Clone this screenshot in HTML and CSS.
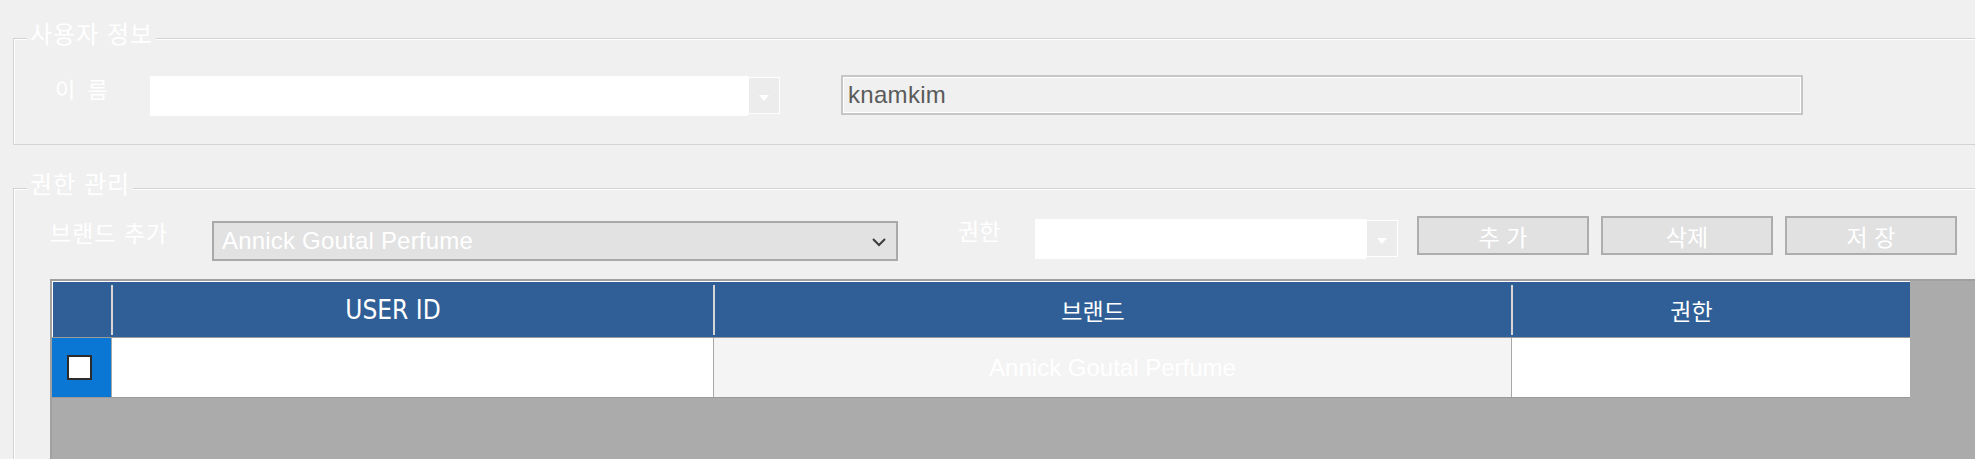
FILE: index.html
```html
<!DOCTYPE html>
<html lang="ko">
<head>
<meta charset="utf-8">
<title>사용자 권한 관리</title>
<link rel="stylesheet" href="styles.css">
</head>
<body>
<div class="page">
  <section class="group group-user">
    <div class="group-title">사용자 정보</div>
    <div class="user-row">
      <span class="lbl lbl-name">이&nbsp;&nbsp;름</span>
      <div class="combo combo-name">
        <div class="combo-field"></div>
        <div class="combo-btn"><span class="tri"></span></div>
      </div>
      <div class="textbox">knamkim</div>
    </div>
  </section>

  <section class="group group-auth">
    <div class="group-title">권한 관리</div>
    <div class="toolbar">
      <span class="lbl lbl-brand">브랜드 추가</span>
      <div class="select-brand">
        <span class="select-text">Annick Goutal Perfume</span>
        <svg class="chev" width="14" height="9" viewBox="0 0 14 9"><path d="M1 1 L7 7 L13 1" fill="none" stroke="#3c3c3c" stroke-width="2"/></svg>
      </div>
      <span class="lbl lbl-auth">권한</span>
      <div class="combo combo-auth">
        <div class="combo-field"></div>
        <div class="combo-btn"><span class="tri"></span></div>
      </div>
      <div class="btns">
        <div class="btn">추 가</div>
        <div class="btn">삭제</div>
        <div class="btn">저 장</div>
      </div>
    </div>

    <div class="grid">
      <div class="grid-head">
        <div class="hcell c-rh"></div>
        <div class="hcell c-user"><span class="htext latin">USER ID</span></div>
        <div class="hcell c-brand"><span class="htext">브랜드</span></div>
        <div class="hcell c-auth"><span class="htext">권한</span></div>
      </div>
      <div class="grid-row">
        <div class="cell c-rh rowhead"><span class="check"></span></div>
        <div class="cell c-user"></div>
        <div class="cell c-brand brand-cell">Annick Goutal Perfume</div>
        <div class="cell c-auth"></div>
      </div>
    </div>
  </section>
</div>
</body>
</html>
```

FILE: styles.css
```css
html, body {
  margin: 0;
  padding: 0;
  overflow: hidden;
}
body {
  background: #f0f0f0;
  width: 1975px;
  height: 459px;
  font-family: "Noto Sans CJK KR", "Liberation Sans", sans-serif;
  color: #ffffff;
}
.page {
  display: flex;
  flex-direction: column;
  padding-top: 38px;
  height: 421px;
  overflow: hidden;
}
.group {
  position: relative;
  margin-left: 13px;
  width: 2000px;
  border: 1px solid #d3d3d3;
  box-shadow: inset 1px 1px 0 #ffffff;
  flex-shrink: 0;
}
.group-title {
  position: absolute;
  left: 13px;
  top: -20px;
  padding: 0 3px;
  background: #f0f0f0;
  font-size: 24px;
  line-height: 28px;
  color: #ffffff;
  letter-spacing: 1px;
}
.group-user {
  padding: 37px 0 28px 41px;
}
.user-row {
  display: flex;
  align-items: flex-start;
  height: 40px;
}
.lbl {
  font-size: 22px;
  line-height: 26px;
  color: #ffffff;
  white-space: pre;
}
.lbl-name {
  width: 95px;
  margin-top: -1px;
}
.combo {
  display: flex;
  height: 40px;
}
.combo-field {
  flex: 1;
  background: #ffffff;
}
.combo-btn {
  width: 30px;
  margin: 1px 0 2px;
  border: 1px solid #ffffff;
  background: #ececec;
  display: flex;
  align-items: center;
  justify-content: center;
}
.tri {
  width: 0;
  height: 0;
  border-left: 5px solid transparent;
  border-right: 5px solid transparent;
  border-top: 6px solid #ffffff;
  margin-top: 4px;
}
.combo-name {
  width: 630px;
}
.textbox {
  margin-left: 61px;
  margin-top: -1px;
  width: 962px;
  height: 40px;
  box-sizing: border-box;
  border: 2px solid #c6c6c6;
  box-shadow: inset 1px 1px 0 #ffffff, inset -1px -1px 0 #ffffff;
  display: flex;
  align-items: center;
  padding-left: 5px;
  font-family: "Liberation Sans", Arial, sans-serif;
  font-size: 24px;
  color: #5a5a5a;
  letter-spacing: 0.3px;
}

.group-auth {
  margin-top: 43px;
  height: 400px;
  padding: 26px 0 0 36px;
}
.toolbar {
  display: flex;
  align-items: flex-start;
  height: 46px;
}
.lbl-brand {
  width: 162px;
  margin-top: 3px;
  font-size: 23px;
  line-height: 28px;
  letter-spacing: 1px;
}
.select-brand {
  margin-top: 6px;
  width: 686px;
  height: 40px;
  box-sizing: border-box;
  border: 2px solid #a9a9a9;
  background: #e2e2e2;
  display: flex;
  align-items: center;
  justify-content: space-between;
  padding: 0 10px 0 8px;
}
.select-text {
  font-family: "Liberation Sans", Arial, sans-serif;
  font-size: 24px;
  letter-spacing: 0.2px;
  color: #ffffff;
}
.chev {
  display: block;
  margin-top: 2px;
}
.lbl-auth {
  margin-left: 60px;
  width: 77px;
  margin-top: 1px;
  font-size: 23px;
  line-height: 28px;
}
.combo-auth {
  margin-top: 4px;
  width: 363px;
}
.btns {
  display: flex;
  gap: 12px;
  margin-left: 19px;
  margin-top: 1px;
}
.btn {
  width: 172px;
  height: 39px;
  box-sizing: border-box;
  border: 2px solid #adadad;
  background: #e1e1e1;
  display: flex;
  align-items: center;
  justify-content: center;
  font-size: 23px;
  color: #ffffff;
  white-space: pre;
}

.grid {
  margin-top: 18px;
  width: 1960px;
  height: 200px;
  border-top: 2px solid #a0a0a0;
  border-left: 2px solid #a0a0a0;
  background: #ababab;
}
.grid-head {
  display: flex;
  width: 1858px;
  height: 56px;
  box-sizing: border-box;
  border-top: 1px solid #ffffff;
  border-left: 1px solid #ffffff;
  background: #2f5f96;
}
.hcell {
  box-sizing: border-box;
  display: flex;
  align-items: center;
  justify-content: center;
  padding-right: 40px;
}
.grid-head .hcell + .hcell {
  border-left: 2px solid #d6d6d6;
  margin: 3px 0 2px;
}
.grid-head .c-rh {
  padding-right: 0;
}
.c-rh { width: 58px; }
.c-user { width: 602px; }
.c-brand { width: 798px; }
.c-auth { width: 399px; }
.htext {
  font-size: 23px;
  color: #ffffff;
  line-height: 28px;
}
.htext.latin {
  font-family: "Liberation Sans Narrow", "DejaVu Sans Condensed", "Liberation Sans", sans-serif;
  font-size: 26px;
}
.grid-row {
  display: flex;
  width: 1858px;
  height: 61px;
  box-sizing: border-box;
  border-top: 1px solid #9a9a9a;
  border-bottom: 1px solid #9a9a9a;
  background: #ffffff;
}
.cell {
  box-sizing: border-box;
  height: 100%;
  display: flex;
  align-items: center;
  justify-content: center;
}
.grid-row .cell + .cell {
  border-left: 1px solid #a8a8a8;
}
.rowhead {
  background: #0a77d5;
  width: 59px;
}
.check {
  width: 21px;
  height: 21px;
  border: 2px solid #2b2b2b;
  background: #ffffff;
  margin-left: -4px;
}
.brand-cell {
  background: #f4f4f4;
  font-family: "Liberation Sans", Arial, sans-serif;
  font-size: 24px;
  color: #ffffff;
}
```
